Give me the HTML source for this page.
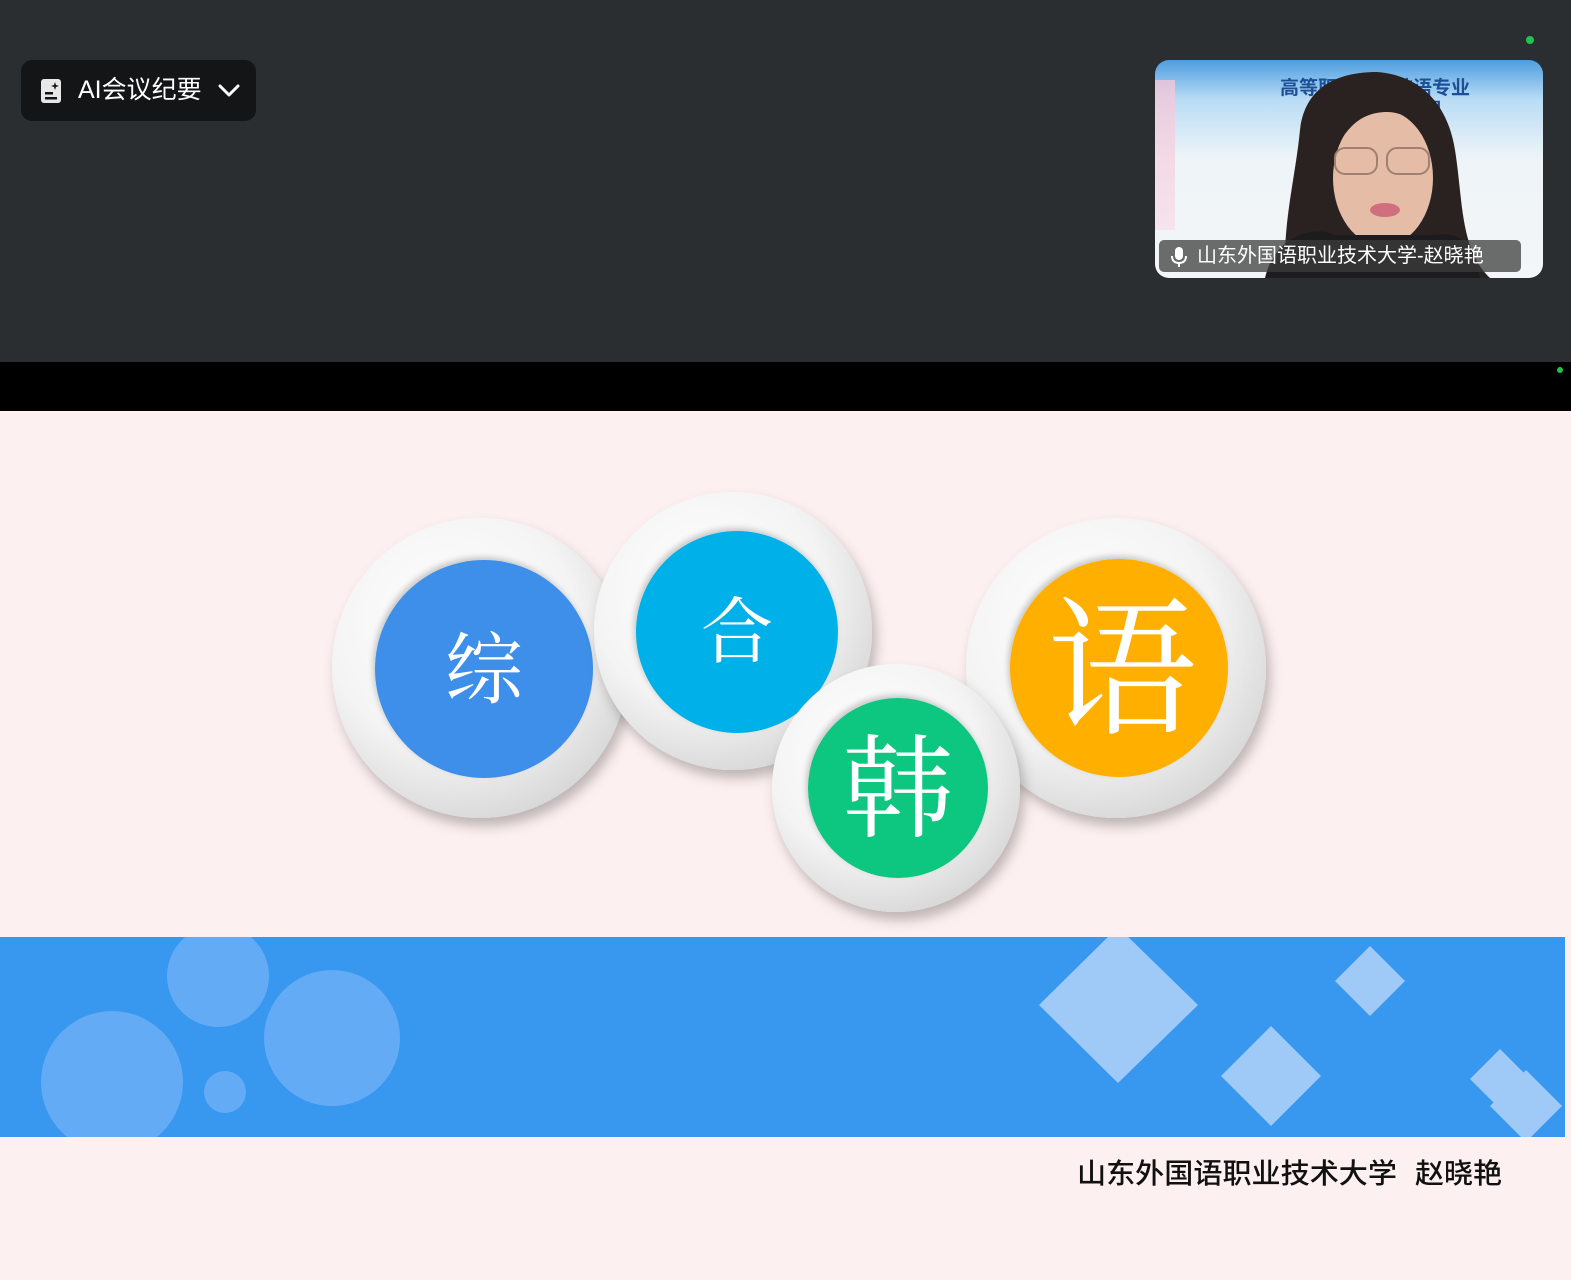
<!DOCTYPE html>
<html><head><meta charset="utf-8"><style>
*{margin:0;padding:0;box-sizing:border-box}
body{width:1571px;height:1280px;overflow:hidden;background:#2b2e31;font-family:"Liberation Sans","Noto Sans CJK SC",sans-serif;position:relative}
.top{position:absolute;left:0;top:0;width:1571px;height:362px;background:#2b2e31}
.black{position:absolute;left:0;top:362px;width:1571px;height:50px;background:#000}
.slide{position:absolute;left:0;top:411px;width:1571px;height:869px;background:#fdf0f0}
.btn{position:absolute;left:21px;top:60px;width:235px;height:61px;background:#141517;border-radius:11px;color:#fff;font-size:25px;line-height:61px}
.tile{position:absolute;left:1155px;top:60px;width:388px;height:218px;border-radius:14px;overflow:hidden;background:linear-gradient(#4e9de0 0%,#b9dcf5 18%,#eef4f8 45%,#f4f6f8 100%)}
.pill{position:absolute;left:4px;top:180px;width:362px;height:32px;background:rgba(60,60,60,.75);border-radius:5px;color:#fff;font-size:20px;line-height:32px;padding-left:38px}
.dot{position:absolute;width:8px;height:8px;border-radius:50%;background:#1fc44f}
</style></head><body>
<div class="top"></div>
<div class="black"></div>
<div class="dot" style="left:1526px;top:36px"></div>
<div class="dot" style="left:1557px;top:367px;width:6px;height:6px"></div>
<div class="btn">
<svg style="position:absolute;left:19px;top:18px" width="22" height="26" viewBox="0 0 22 26"><rect x="1" y="1" width="20" height="24" rx="3" fill="#e8e8e8"/><rect x="5" y="14" width="8" height="2.5" fill="#141517"/><rect x="5" y="19" width="12" height="2.5" fill="#141517"/><path d="M15 4 L16 7 L19 8 L16 9 L15 12 L14 9 L11 8 L14 7Z" fill="#141517"/></svg>
<span style="position:absolute;left:57px;top:0">AI会议纪要</span>
<svg style="position:absolute;left:197px;top:24px" width="22" height="14" viewBox="0 0 22 14"><path d="M2 2 L11 11 L20 2" stroke="#fff" stroke-width="3" fill="none" stroke-linecap="round" stroke-linejoin="round"/></svg>
</div>
<div class="tile">
<div style="position:absolute;left:0;top:20px;width:20px;height:150px;background:linear-gradient(#f3c6d8,#f7dfe8);opacity:.8"></div>
<div style="position:absolute;left:110px;top:18px;color:#1d4f96;font-weight:bold;font-size:19px;line-height:22px;width:220px;text-align:center">高等职业教育韩语专业<br>课程思政示范课</div>
<svg style="position:absolute;left:0;top:0" width="388" height="218" viewBox="0 0 388 218">
<path d="M130 218 C128 160 140 120 145 70 C150 25 185 12 222 12 C262 15 292 40 300 90 C308 140 305 190 335 218Z" fill="#2a2220"/>
<ellipse cx="228" cy="118" rx="50" ry="68" fill="#e5bda6"/>
<path d="M172 110 C175 45 205 28 232 30 C262 32 282 55 284 110 C272 70 255 52 232 52 C208 52 188 65 172 110Z" fill="#2a2220"/>
<rect x="180" y="88" width="42" height="26" rx="10" fill="none" stroke="#a08070" stroke-width="2"/>
<rect x="232" y="88" width="42" height="26" rx="10" fill="none" stroke="#a08070" stroke-width="2"/>
<ellipse cx="230" cy="150" rx="15" ry="7" fill="#d0707e"/>
<path d="M110 218 C120 175 160 165 180 175 L280 175 C310 170 320 190 325 218Z" fill="#1c1c1e"/>
</svg>
<div class="pill"><svg style="position:absolute;left:11px;top:6px" width="18" height="22" viewBox="0 0 18 22"><rect x="5" y="1" width="8" height="13" rx="4" fill="#fff"/><path d="M2 10 C2 15 5 17 9 17 C13 17 16 15 16 10" stroke="#fff" stroke-width="2" fill="none"/><rect x="8" y="17" width="2" height="4" fill="#fff"/></svg>山东外国语职业技术大学-赵晓艳</div>
</div>
<div class="slide">
<svg width="1571" height="869" viewBox="0 411 1571 869" style="position:absolute;left:0;top:0">
<defs>
<radialGradient id="ring" cx="40%" cy="35%" r="70%"><stop offset="0" stop-color="#ffffff"/><stop offset=".6" stop-color="#f4f4f4"/><stop offset="1" stop-color="#d6d6d6"/></radialGradient>
<filter id="sh" x="-20%" y="-20%" width="140%" height="140%"><feDropShadow dx="4" dy="8" stdDeviation="6" flood-color="#000" flood-opacity=".25"/></filter>
<filter id="ish"><feDropShadow dx="-2" dy="-3" stdDeviation="3" flood-color="#000" flood-opacity=".2"/></filter>
</defs>
<g font-family="Liberation Serif,'Noto Serif CJK SC',serif" fill="#fff" text-anchor="middle">
<ellipse cx="480" cy="668" rx="148" ry="150" fill="url(#ring)" filter="url(#sh)"/>
<circle cx="484" cy="669" r="109" fill="#3d8fe9" filter="url(#ish)"/>
<text x="484" y="697" font-size="78">综</text>
<ellipse cx="1116" cy="668" rx="150" ry="150" fill="url(#ring)" filter="url(#sh)"/>
<circle cx="1119" cy="668" r="109" fill="#ffaf02" filter="url(#ish)"/>
<text x="1122" y="722" font-size="150">语</text>
<ellipse cx="733" cy="631" rx="139" ry="139" fill="url(#ring)" filter="url(#sh)"/>
<circle cx="737" cy="632" r="101" fill="#05b0e8" filter="url(#ish)"/>
<text x="737" y="657" font-size="72">合</text>
<ellipse cx="896" cy="788" rx="124" ry="124" fill="url(#ring)" filter="url(#sh)"/>
<circle cx="898" cy="788" r="90" fill="#0ec680" filter="url(#ish)"/>
<text x="898" y="828" font-size="112">韩</text>
</g>
<rect x="0" y="937" width="1565" height="200" fill="#3897ef"/>
<clipPath id="bc"><rect x="0" y="937" width="1565" height="200"/></clipPath>
<g clip-path="url(#bc)" fill="#64abf6">
<circle cx="218" cy="976" r="51"/><circle cx="332" cy="1038" r="68"/><circle cx="112" cy="1082" r="71"/><circle cx="225" cy="1092" r="21"/>
</g>
<g clip-path="url(#bc)" fill="#9fcaf8">
<path d="M1118 927 L1198 1005 L1118 1083 L1039 1005Z"/>
<path d="M1370 946 L1405 981 L1370 1016 L1335 981Z"/>
<path d="M1271 1026 L1321 1076 L1271 1126 L1221 1076Z"/>
<path d="M1500 1049 L1530 1079 L1500 1109 L1470 1079Z"/>
<path d="M1526 1070 L1562 1106 L1526 1142 L1490 1106Z"/>
</g>
<g font-family="Liberation Sans,'Noto Sans CJK SC',sans-serif" font-size="28" font-weight="500" fill="#111">
<text x="1077" y="1183" textLength="320" lengthAdjust="spacingAndGlyphs">山东外国语职业技术大学</text>
<text x="1415" y="1183" textLength="87" lengthAdjust="spacingAndGlyphs">赵晓艳</text>
</g>
</svg>
</div>
</body></html>
